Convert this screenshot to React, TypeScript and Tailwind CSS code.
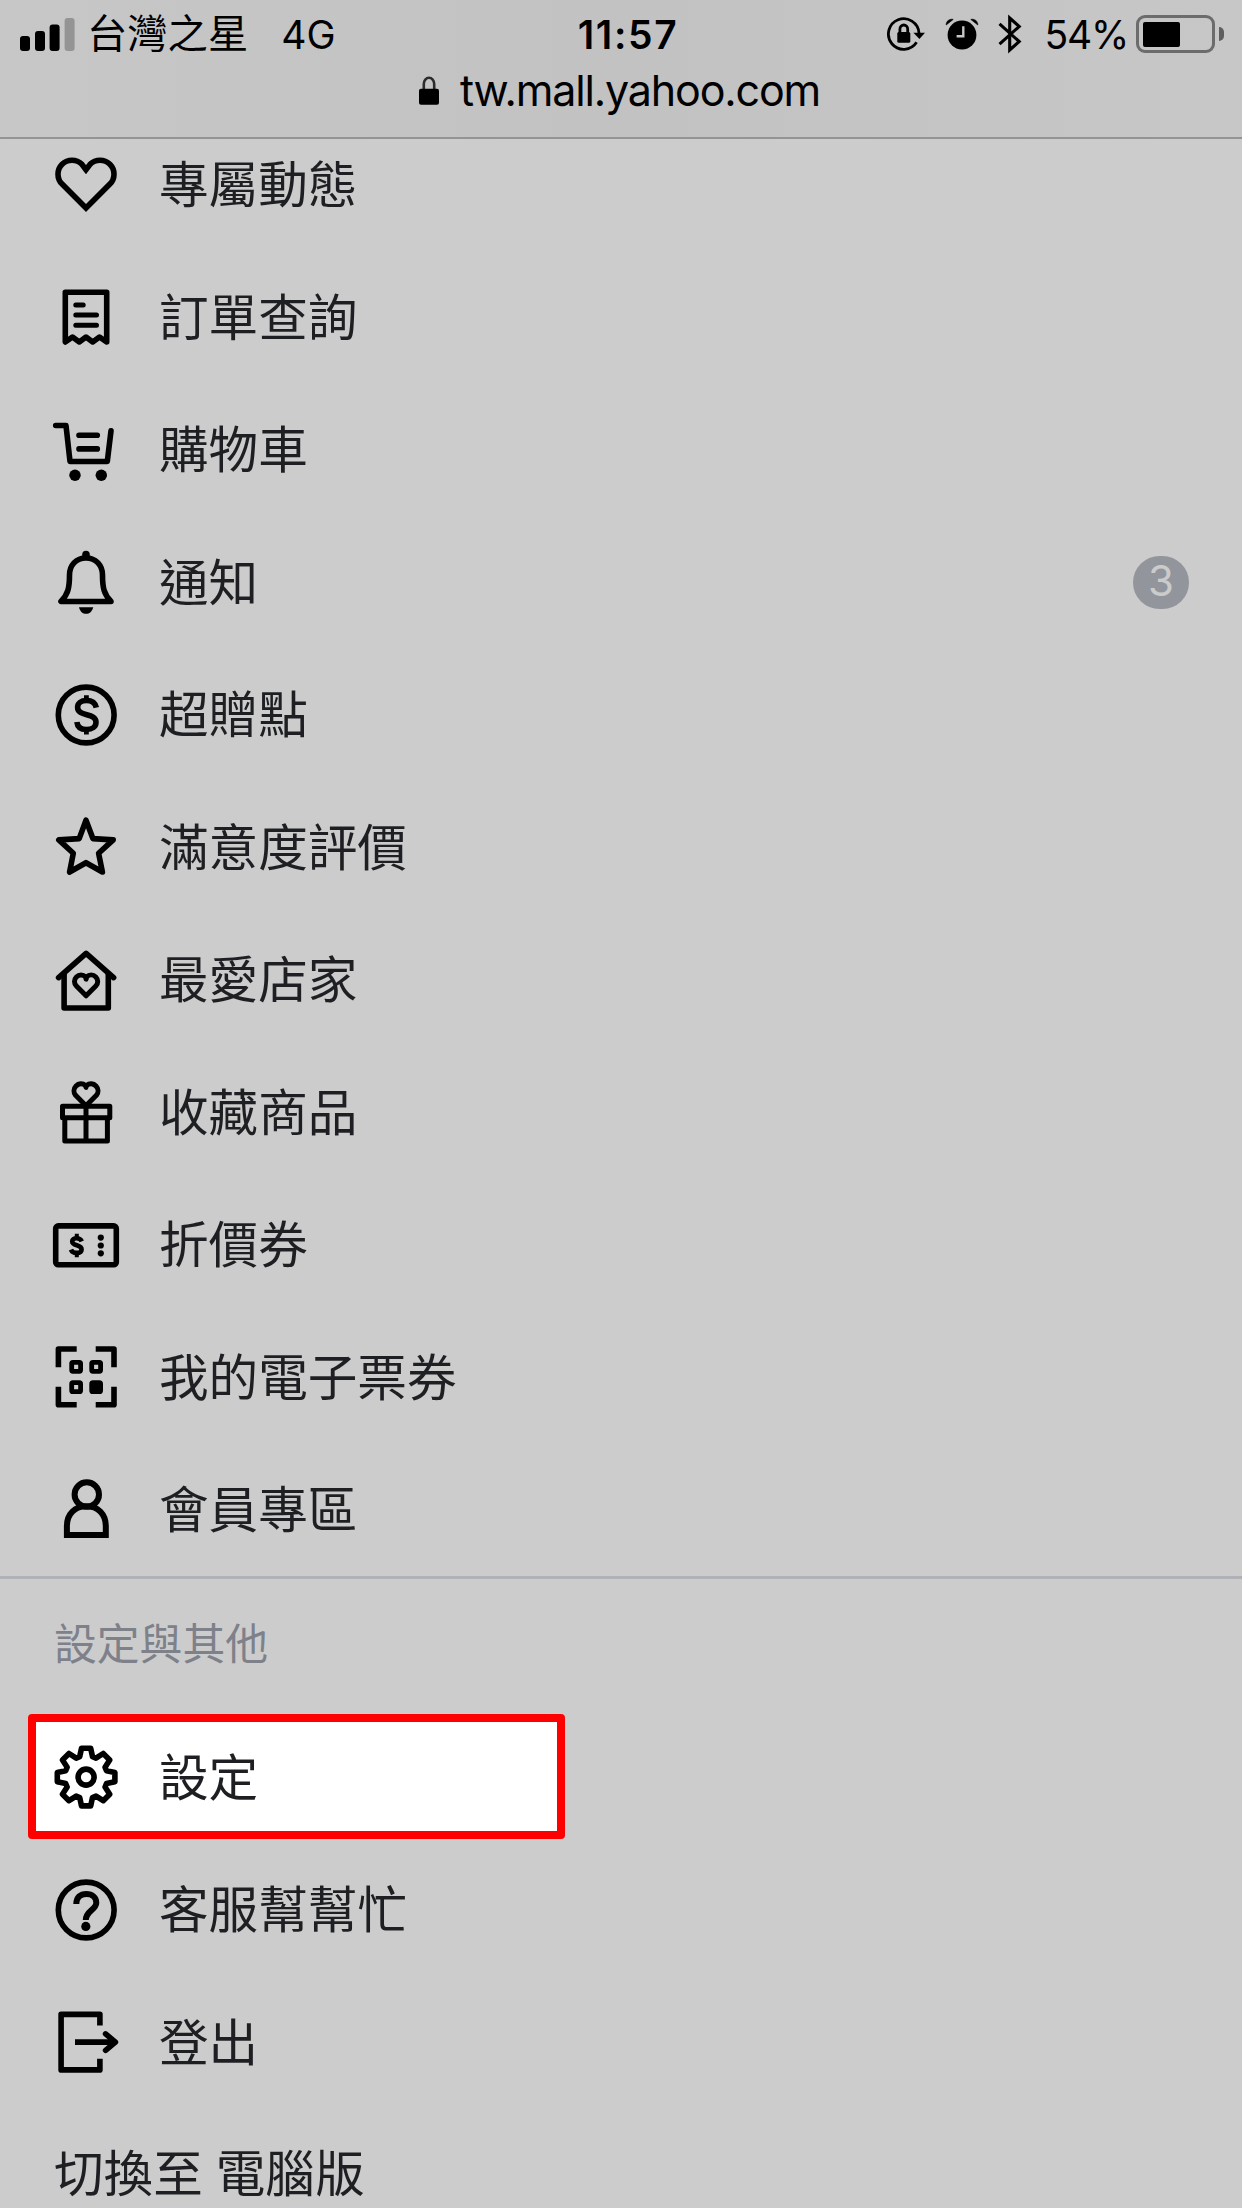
import React from 'react';

type IconProps = { children: React.ReactNode };

interface MenuItem {
  label: string;
  icon: React.ReactNode;
  badge?: number;
}

const Icon: React.FC<IconProps> = ({ children }) => (
  <svg
    viewBox="0 0 72 72"
    className="w-[72px] h-[72px] shrink-0 text-black"
    fill="none"
    stroke="currentColor"
    strokeWidth="5.6"
    strokeLinejoin="round"
  >
    {children}
  </svg>
);

const HeartIcon = () => (
  <Icon>
    <path
      strokeLinejoin="miter"
      d="M36 20.7L31.9 15.3A14 14 0 0 0 12.1 35.1L36 59L59.9 35.1A14 14 0 0 0 40.1 15.3Z"
    />
  </Icon>
);

const ReceiptIcon = () => (
  <Icon>
    <path d="M15.3 11.3H56.7V61L49.5 56L42.7 61L36 56L29.3 61L22.5 56L15.3 61Z" />
    <path strokeWidth="5" strokeLinecap="round" d="M25.8 24H33.2M25.8 34H46.5M25.8 44.3H46.5" />
  </Icon>
);

const CartIcon = () => (
  <Icon>
    <path strokeLinecap="round" d="M5.7 11.5H16L20 47.5H57.3L61 16.9" />
    <path strokeLinecap="round" d="M29 21.2H47.3M29 34.9H47.3" />
    <circle cx="25" cy="61.2" r="5.7" fill="currentColor" stroke="none" />
    <circle cx="51.3" cy="61.2" r="5.7" fill="currentColor" stroke="none" />
  </Icon>
);

const BellIcon = () => (
  <Icon>
    <path d="M36 12C26 12 19.5 19.5 19.5 29C19.5 42 18 48 11 55.5H61C54 48 52.5 42 52.5 29C52.5 19.5 46 12 36 12Z" />
    <circle cx="36" cy="8.6" r="3.8" fill="currentColor" stroke="none" />
    <path d="M29 61.2H43.3C42 65.5 39.5 67.8 36.1 67.8S30 65.5 29 61.2Z" fill="currentColor" stroke="none" />
  </Icon>
);

const DollarIcon = () => (
  <Icon>
    <circle cx="36.2" cy="36" r="27.9" />
    <path d="M46.3 28.6C45.3 23.8 41.5 21.5 36.5 21.5C31 21.5 27.6 24.2 27.6 28.2C27.6 38.2 46 33.2 46 43.2C46 47.8 42 50.5 36.5 50.5C31 50.5 27.4 48 26.9 43" />
    <path strokeWidth="4.8" d="M36.4 16.3V22M36.4 50V55.6" />
  </Icon>
);

const StarIcon = () => (
  <Icon>
    <path d="M36 9.2L42.9 27.6L63.2 28.9L48.6 42.3L52.4 61L36 51.7L19.6 61L23.3 42.3L8.8 28.9L29.2 27.6Z" />
  </Icon>
);

const StoreIcon = () => (
  <Icon>
    <path strokeLinecap="round" d="M8.6 33.6L36.1 9.4L63.6 33.6" />
    <path d="M14.1 29V64H58.3V29" />
    <path strokeWidth="5" d="M36.1 35.1L35.6 32.9A6.5 6.5 0 0 0 26.4 42.1L36.1 51.8L45.8 42.1A6.5 6.5 0 0 0 36.6 32.9Z" />
  </Icon>
);

const GiftIcon = () => (
  <Icon>
    <path strokeWidth="5" d="M36 11.4L35.4 9.4A7 7 0 0 0 25.6 19.3L36 29.7L46.4 19.3A7 7 0 0 0 36.6 9.4Z" />
    <path strokeWidth="5" d="M12.5 30.2H59.8V41.8H12.5ZM14.8 41.8V65H57.4V41.8M36 30V65" />
  </Icon>
);

const CouponIcon = () => (
  <Icon>
    <rect x="5.7" y="16.9" width="60.6" height="38.9" rx="2.6" />
    <path
      strokeWidth="4.6"
      d="M31.8 32.4C30.8 30 28.9 29.2 26.6 29.2C24 29.2 22.2 30.4 22.2 32.4C22.2 37.4 31.6 35.2 31.6 40.4C31.6 42.6 29.6 43.9 26.6 43.9C24 43.9 21.9 43 20.9 40.6"
    />
    <path strokeWidth="4" d="M26.8 24.8V29M26.8 44V48.2" />
    <g fill="currentColor" stroke="none">
      <circle cx="50.8" cy="28.6" r="3.1" />
      <circle cx="50.8" cy="36.5" r="3.1" />
      <circle cx="50.8" cy="44.3" r="3.1" />
    </g>
  </Icon>
);

const TicketIcon = () => (
  <Icon>
    <path d="M8.4 26.3V8H26.7M45.7 8H64V26.3M64 45.7V63.7H45.7M26.7 63.7H8.4V45.7" />
    <g strokeWidth="4.8">
      <rect x="21.7" y="21.4" width="8.9" height="8.9" rx="1.2" />
      <rect x="41.7" y="21.4" width="8.9" height="8.9" rx="1.2" />
      <rect x="21.7" y="41.7" width="8.9" height="8.9" rx="1.2" />
      <rect x="41.7" y="41.7" width="8.9" height="8.9" rx="1.2" fill="currentColor" />
    </g>
  </Icon>
);

const MemberIcon = () => (
  <Icon>
    <circle cx="36.8" cy="20.5" r="12.2" strokeWidth="6" />
    <path strokeWidth="6" strokeLinejoin="miter" d="M16.9 61V52C16.9 40 25 32.3 36.4 32.3S55.8 40 55.8 52V61Z" />
  </Icon>
);

// one tooth on the vertical axis, repeated every 45 degrees
const toothPoints = [[-6.4, -20.4], [-4.6, -28.8], [4.6, -28.8], [6.4, -20.4]];
const gearPoints = Array.from({ length: 8 }, (_, i) => {
  const a = (i * Math.PI) / 4;
  return toothPoints
    .map(([x, y]) => {
      const px = 36.1 + x * Math.cos(a) - y * Math.sin(a);
      const py = 36.1 + x * Math.sin(a) + y * Math.cos(a);
      return `${px.toFixed(2)},${py.toFixed(2)}`;
    })
    .join(' ');
}).join(' ');

const GearIcon = () => (
  <Icon>
    <polygon points={gearPoints} />
    <circle cx="36.1" cy="36.1" r="8" />
  </Icon>
);

const HelpIcon = () => (
  <Icon>
    <circle cx="36.2" cy="36" r="27.9" />
    <path strokeWidth="6" d="M26.3 30C26.3 23.5 30.3 19.9 36.3 19.9C42.3 19.9 46.3 23.6 46.3 28.7C46.3 36 35.8 36.5 35.8 46" />
    <circle cx="35.8" cy="52.4" r="4.6" fill="currentColor" stroke="none" />
  </Icon>
);

const LogoutIcon = () => (
  <Icon>
    <path d="M49.9 19.4V8.4H11.1V63.9H49.9V52.7" />
    <path d="M25 36.1H65" />
    <path strokeLinecap="round" d="M55.6 27.9L65.4 36.1L55.6 44.3" />
  </Icon>
);

const mainMenu: MenuItem[] = [
  { label: '專屬動態', icon: <HeartIcon /> },
  { label: '訂單查詢', icon: <ReceiptIcon /> },
  { label: '購物車', icon: <CartIcon /> },
  { label: '通知', icon: <BellIcon />, badge: 3 },
  { label: '超贈點', icon: <DollarIcon /> },
  { label: '滿意度評價', icon: <StarIcon /> },
  { label: '最愛店家', icon: <StoreIcon /> },
  { label: '收藏商品', icon: <GiftIcon /> },
  { label: '折價券', icon: <CouponIcon /> },
  { label: '我的電子票券', icon: <TicketIcon /> },
  { label: '會員專區', icon: <MemberIcon /> },
];

const otherMenu: MenuItem[] = [
  { label: '設定', icon: <GearIcon /> },
  { label: '客服幫幫忙', icon: <HelpIcon /> },
  { label: '登出', icon: <LogoutIcon /> },
];

const MenuRow: React.FC<{ item: MenuItem }> = ({ item }) => (
  <li className="flex items-center h-[132.5px] pl-[50px] pr-[53px]">
    {item.icon}
    <span className="pt-[2px] ml-[37px] text-[49.6px] leading-none">{item.label}</span>
    {item.badge !== undefined && (
      <span className="ml-auto flex items-center justify-center w-[56px] h-[53px] pb-[2px] rounded-full bg-[#92959c] text-[#cbcbcb] font-[Inter] text-[42px] leading-none">
        {item.badge}
      </span>
    )}
  </li>
);

const StatusBar = () => (
  <div className="grid grid-cols-3 h-[68px] text-[39px] leading-none text-black">
    <div className="flex items-center pl-[20px]">
      <svg viewBox="0 0 55 33" className="w-[55px] h-[33px] shrink-0">
        <rect x="0" y="18" width="10" height="15" rx="3" />
        <rect x="15" y="13" width="10" height="20" rx="3" />
        <rect x="29.6" y="6.5" width="10" height="26.5" rx="3" />
        <rect x="44.6" y="0" width="10" height="33" rx="3" fill="#949494" />
      </svg>
      <span className="ml-[12px] text-[40.3px] whitespace-nowrap">台灣之星</span>
      <span className="ml-[33px]">4G</span>
    </div>
    <div className="flex items-center justify-center pl-[14px] font-semibold tracking-[1.6px]">11:57</div>
    <div className="flex items-center justify-end pr-[18px]">
      {/* rotation lock */}
      <svg viewBox="0 0 40 38" className="w-[40px] h-[38px] shrink-0" fill="none" stroke="black" strokeWidth="2.8">
        <path d="M33 18A15.3 15.3 0 1 0 30.6 27.3" />
        <path d="M27.4 17.7H39L33.4 23.9Z" fill="black" stroke="none" />
        <rect x="11.3" y="17" width="13" height="10.8" rx="1.6" fill="black" stroke="none" />
        <path d="M13.9 18V14.2A3.9 4.2 0 0 1 21.7 14.2V18" />
      </svg>
      {/* alarm */}
      <svg viewBox="0 0 34 34" className="w-[34px] h-[34px] ml-[19px] shrink-0" fill="none" stroke="black">
        <circle cx="17" cy="18" r="14.4" fill="black" stroke="none" />
        <path d="M18.3 9.3V19.3H11.6" stroke="#c6c6c6" strokeWidth="2.4" />
        <path d="M1.2 8C1 4 4.5 1.6 8.2 2.4ZM32.8 8C33 4 29.5 1.6 25.8 2.4Z" fill="black" strokeWidth="0.6" />
      </svg>
      {/* bluetooth */}
      <svg viewBox="0 0 24 40" className="w-[24px] h-[40px] ml-[19px] shrink-0" fill="none" stroke="black" strokeWidth="3.1">
        <path d="M1.5 9.8L21.2 27.6L11.7 36V4L21.2 12.4L1.5 30.2" />
      </svg>
      <span className="ml-[22px] tracking-[-1.2px]">54%</span>
      <div className="ml-[8px] w-[79px] h-[38px] rounded-[9px] border-3 border-[#6c6c6c] p-[3.5px] shrink-0">
        <div className="w-[37px] h-full rounded-[2px] bg-black" />
      </div>
      <div className="ml-[4px] w-[5px] h-[14px] rounded-r-full bg-[#5f5f5f] shrink-0" />
    </div>
  </div>
);

const App: React.FC = () => {
  return (
    <div className="w-[1242px] h-[2208px] overflow-hidden bg-[#cccccc] text-[#1d1f22] font-[Inter,'Noto_Sans_CJK_TC',sans-serif]">
      <header className="h-[139px] border-b-2 border-[#949494] bg-linear-to-r from-[#c7c7c7] via-[#c2c2c2] to-[#c7c7c7]">
        <StatusBar />
        <div className="flex items-center h-[44px] pl-[419px] text-black">
          <svg viewBox="0 0 20 29" className="w-[20px] h-[29px]">
            <path d="M4.8 14V8A5.2 6.2 0 0 1 15.2 8V14" fill="none" stroke="#2c2c2c" strokeWidth="2.6" />
            <rect x="0" y="12.8" width="20" height="16" rx="2" />
          </svg>
          <span className="ml-[21px] text-[43px] leading-none tracking-[-1.15px]">tw.mall.yahoo.com</span>
        </div>
      </header>

      <main className="-mt-[20.3px]">
        <ul>
          {mainMenu.map((item) => (
            <MenuRow key={item.label} item={item} />
          ))}
        </ul>

        <section>
          <h2 className="flex items-center h-[135px] border-t-3 border-[#aeb1b6] pl-[54px] text-[42.8px] leading-none text-[#7e818a]">
            設定與其他
          </h2>
          <div className="relative">
            {/* highlighted entry */}
            <div className="absolute left-[28px] top-[3px] w-[537px] h-[125px] rounded-[4px] border-8 border-[#ff0000] bg-white" />
            <ul className="relative">
              {otherMenu.map((item) => (
                <MenuRow key={item.label} item={item} />
              ))}
            </ul>
          </div>
          <div className="flex items-center h-[132.5px] pl-[54px] text-[49.6px] leading-none [word-spacing:-1px]">
            切換至 電腦版
          </div>
        </section>
      </main>
    </div>
  );
};

export default App;
